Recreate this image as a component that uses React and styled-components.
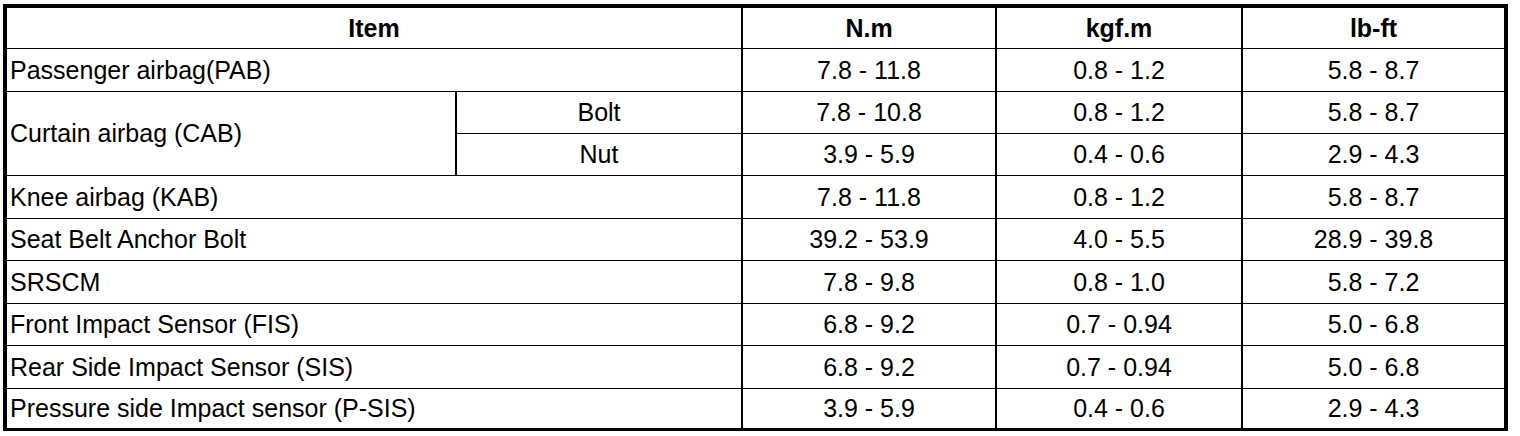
import React from 'react'
import styled, { createGlobalStyle } from 'styled-components'

const GlobalStyle = createGlobalStyle`
  html, body {
    margin: 0;
    padding: 0;
    background: #ffffff;
  }
  body {
    font-family: 'Liberation Sans', Arial, sans-serif;
    color: #000000;
  }
`

const Page = styled.div`
  width: 1520px;
  height: 436px;
  padding: 4px 0 0 3px;
  box-sizing: border-box;
`

const Table = styled.div`
  width: 1505px;
  box-sizing: border-box;
  border: 4px solid #000;
  border-bottom-width: 3px;
  background: #000;
  display: grid;
  grid-template-columns: 448px 284px 252px 244px 261px;
  grid-template-rows: 40px 42px 41px 41px 42px 41px 42px 41px 42px 39px;
  column-gap: 2px;
  row-gap: 1px;
`

const Cell = styled.div`
  background: #fff;
  display: flex;
  align-items: center;
  justify-content: ${({ $left }) => ($left ? 'flex-start' : 'center')};
  padding: ${({ $left }) => ($left ? '0 0 0 3px' : '0')};
  font-size: 25px;
  font-weight: ${({ $head }) => ($head ? 700 : 400)};
  line-height: 1;
  white-space: nowrap;
  grid-column: ${({ $cols }) => ($cols ? `span ${$cols}` : 'auto')};
  grid-row: ${({ $rows }) => ($rows ? `span ${$rows}` : 'auto')};
`

const rows = [
  { item: 'Passenger airbag(PAB)', values: ['7.8 - 11.8', '0.8 - 1.2', '5.8 - 8.7'] },
  { item: 'Curtain airbag (CAB)', sub: 'Bolt', span: 2, values: ['7.8 - 10.8', '0.8 - 1.2', '5.8 - 8.7'] },
  { sub: 'Nut', values: ['3.9 - 5.9', '0.4 - 0.6', '2.9 - 4.3'] },
  { item: 'Knee airbag (KAB)', values: ['7.8 - 11.8', '0.8 - 1.2', '5.8 - 8.7'] },
  { item: 'Seat Belt Anchor Bolt', values: ['39.2 - 53.9', '4.0 - 5.5', '28.9 - 39.8'] },
  { item: 'SRSCM', values: ['7.8 - 9.8', '0.8 - 1.0', '5.8 - 7.2'] },
  { item: 'Front Impact Sensor (FIS)', values: ['6.8 - 9.2', '0.7 - 0.94', '5.0 - 6.8'] },
  { item: 'Rear Side Impact Sensor (SIS)', values: ['6.8 - 9.2', '0.7 - 0.94', '5.0 - 6.8'] },
  { item: 'Pressure side Impact sensor (P-SIS)', values: ['3.9 - 5.9', '0.4 - 0.6', '2.9 - 4.3'] },
]

export default function App() {
  return (
    <Page>
      <GlobalStyle />
      <Table>
        <Cell $head $cols={2}>Item</Cell>
        <Cell $head>N.m</Cell>
        <Cell $head>kgf.m</Cell>
        <Cell $head>lb-ft</Cell>
        {rows.map((row, i) => (
          <React.Fragment key={i}>
            {row.item && (
              <Cell $left $cols={row.sub ? undefined : 2} $rows={row.span}>
                {row.item}
              </Cell>
            )}
            {row.sub && <Cell>{row.sub}</Cell>}
            {row.values.map((v, j) => (
              <Cell key={j}>{v}</Cell>
            ))}
          </React.Fragment>
        ))}
      </Table>
    </Page>
  )
}
